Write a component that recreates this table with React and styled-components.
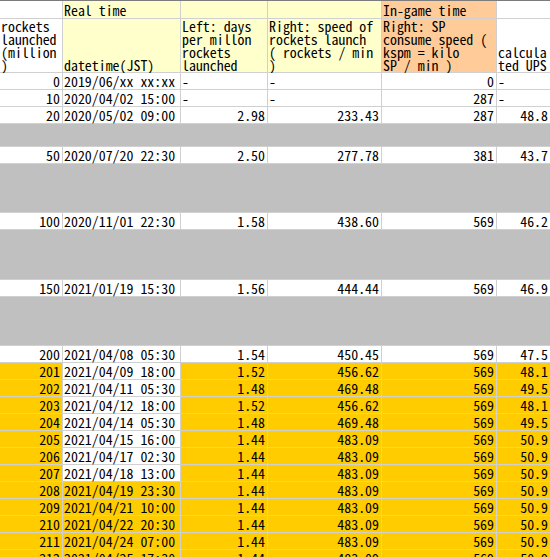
import React from "react";
import styled, { createGlobalStyle } from "styled-components";

const GlobalStyle = createGlobalStyle`
  html, body {
    margin: 0;
    padding: 0;
    background: #fff;
    overflow: hidden;
  }
`;

const Sheet = styled.div`
  display: grid;
  grid-template-columns: 62px 117px 86px 113px 114px 53px;
  gap: 1px;
  width: max-content;
  background: #d0d0d0;
  border-top: 1px solid #7c7c7c;
  font-family: "Noto Sans Mono CJK JP", "DejaVu Sans Mono", monospace;
  font-size: 13.9px;
  color: #000;
`;

const Cell = styled.div`
  display: flex;
  flex-direction: column;
  justify-content: ${(props) => (props.$top ? "flex-start" : "flex-end")};
  align-items: ${(props) => (props.$right ? "flex-end" : "flex-start")};
  height: ${(props) => props.$h || 16}px;
  padding: 0 2px 0 1px;
  line-height: ${(props) => (props.$header ? "13px" : "16px")};
  background: ${(props) => props.$bg || "#fff"};
  white-space: nowrap;
`;

const Band = styled.div`
  grid-column: 1 / -1;
  height: ${(props) => props.$h}px;
  background: #c0c0c0;
`;

const YELLOW = "#ffffcc";
const ORANGE = "#ffcc99";
const GOLD = "#ffcc00";

const rows = [
  { n: "0", dt: "2019/06/xx xx:xx", days: "-", speed: "-", sp: "0", ups: "-" },
  { n: "10", dt: "2020/04/02 15:00", days: "-", speed: "-", sp: "287", ups: "-" },
  { n: "20", dt: "2020/05/02 09:00", days: "2.98", speed: "233.43", sp: "287", ups: "48.8" },
  { band: 22 },
  { n: "50", dt: "2020/07/20 22:30", days: "2.50", speed: "277.78", sp: "381", ups: "43.7" },
  { band: 48 },
  { n: "100", dt: "2020/11/01 22:30", days: "1.58", speed: "438.60", sp: "569", ups: "46.2" },
  { band: 49 },
  { n: "150", dt: "2021/01/19 15:30", days: "1.56", speed: "444.44", sp: "569", ups: "46.9" },
  { band: 48 },
  { n: "200", dt: "2021/04/08 05:30", days: "1.54", speed: "450.45", sp: "569", ups: "47.5" },
  { n: "201", dt: "2021/04/09 18:00", days: "1.52", speed: "456.62", sp: "569", ups: "48.1", hi: true },
  { n: "202", dt: "2021/04/11 05:30", days: "1.48", speed: "469.48", sp: "569", ups: "49.5", hi: true },
  { n: "203", dt: "2021/04/12 18:00", days: "1.52", speed: "456.62", sp: "569", ups: "48.1", hi: true },
  { n: "204", dt: "2021/04/14 05:30", days: "1.48", speed: "469.48", sp: "569", ups: "49.5", hi: true },
  { n: "205", dt: "2021/04/15 16:00", days: "1.44", speed: "483.09", sp: "569", ups: "50.9", hi: true },
  { n: "206", dt: "2021/04/17 02:30", days: "1.44", speed: "483.09", sp: "569", ups: "50.9", hi: true },
  { n: "207", dt: "2021/04/18 13:00", days: "1.44", speed: "483.09", sp: "569", ups: "50.9", hi: true },
  { n: "208", dt: "2021/04/19 23:30", days: "1.44", speed: "483.09", sp: "569", ups: "50.9", hi: true, dateHi: true },
  { n: "209", dt: "2021/04/21 10:00", days: "1.44", speed: "483.09", sp: "569", ups: "50.9", hi: true, dateHi: true },
  { n: "210", dt: "2021/04/22 20:30", days: "1.44", speed: "483.09", sp: "569", ups: "50.9", hi: true, dateHi: true },
  { n: "211", dt: "2021/04/24 07:00", days: "1.44", speed: "483.09", sp: "569", ups: "50.9", hi: true, dateHi: true },
  { n: "212", dt: "2021/04/25 17:30", days: "1.44", speed: "483.09", sp: "569", ups: "50.9", hi: true, dateHi: true },
];

// "-" is text in the sheet, so it sits on the left like other text
const isText = (v) => v === "-";

function DataRow({ row }) {
  const bg = row.hi ? GOLD : "#fff";
  return (
    <>
      <Cell $right $bg={bg}>{row.n}</Cell>
      <Cell $bg={row.dateHi ? GOLD : "#fff"}>{row.dt}</Cell>
      <Cell $right={!isText(row.days)} $bg={bg}>{row.days}</Cell>
      <Cell $right={!isText(row.speed)} $bg={bg}>{row.speed}</Cell>
      <Cell $right={!isText(row.sp)} $bg={bg}>{row.sp}</Cell>
      <Cell $right={!isText(row.ups)} $bg={bg}>{row.ups}</Cell>
    </>
  );
}

export default function App() {
  return (
    <>
      <GlobalStyle />
      <Sheet>
        <Cell $h={17} />
        <Cell $h={17} $bg={YELLOW}>Real time</Cell>
        <Cell $h={17} $bg={YELLOW} />
        <Cell $h={17} $bg={YELLOW} />
        <Cell $h={17} $bg={ORANGE}>In-game time</Cell>
        <Cell $h={17} />

        <Cell $h={53} $header>
          <span>rockets</span>
          <span>launched</span>
          <span>(million</span>
          <span>)</span>
        </Cell>
        <Cell $h={53} $header $bg={YELLOW}>
          datetime(JST)
        </Cell>
        <Cell $h={53} $header $bg={YELLOW}>
          <span>Left: days</span>
          <span>per millon</span>
          <span>rockets</span>
          <span>launched</span>
        </Cell>
        <Cell $h={53} $header $bg={YELLOW}>
          <span>Right: speed of</span>
          <span>rockets launch</span>
          <span>( rockets / min</span>
          <span>)</span>
        </Cell>
        <Cell $h={53} $header $bg={ORANGE}>
          <span>Right: SP</span>
          <span>consume speed (</span>
          <span>kspm = kilo</span>
          <span>SP / min )</span>
        </Cell>
        <Cell $h={53} $header>
          <span>calcula</span>
          <span>ted UPS</span>
        </Cell>

        {rows.map((row, i) =>
          row.band ? <Band key={i} $h={row.band} /> : <DataRow key={i} row={row} />
        )}
      </Sheet>
    </>
  );
}
